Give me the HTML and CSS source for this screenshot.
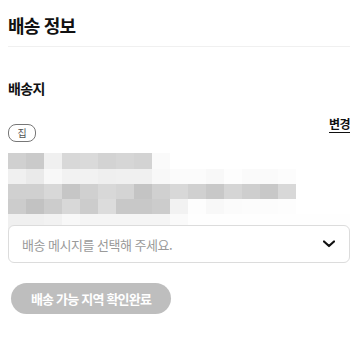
FILE: index.html
```html
<!DOCTYPE html>
<html lang="ko">
<head>
<meta charset="utf-8">
<link rel="stylesheet" href="styles.css">
</head>
<body>
<div class="page">
  <header class="head">
    <h1 class="title">배송 정보</h1>
  </header>
  <section class="ship">
    <h2 class="label">배송지</h2>
    <div class="addr-row">
      <span class="badge">집</span>
      <a class="change">변경</a>
    </div>
    <div class="blur">
      <div class="brow r1">
        <i style="background:#d0d0d0"></i><i style="background:#cacaca"></i><i style="background:#f0f0f0"></i><i style="background:#d8d8d8"></i><i style="background:#dadada"></i><i style="background:#d3d3d3"></i><i style="background:#d6d6d6"></i><i style="background:#d3d3d3"></i><i style="background:#fafafa"></i>
      </div>
      <div class="brow">
        <i style="background:#f0f0f0"></i><i style="background:#eaeaea"></i><i style="background:#f8f8f8"></i><i style="background:#f2f2f2"></i><i style="background:#f2f2f2"></i><i style="background:#efefef"></i><i style="background:#f0f0f0"></i><i style="background:#f0f0f0"></i><i style="background:#f8f8f8"></i><i style="background:#fbfbfb"></i><i style="background:#fbfbfb"></i><i style="background:#f8f8f8"></i><i style="background:#fdfdfd"></i><i style="background:#fafafa"></i><i style="background:#fafafa"></i><i style="background:#fcfcfc"></i>
      </div>
      <div class="brow">
        <i style="background:#d0d0d0"></i><i style="background:#d0d0d0"></i><i style="background:#d8d8d8"></i><i style="background:#c6c6c6"></i><i style="background:#d0d0d0"></i><i style="background:#d8d8d8"></i><i style="background:#d4d4d4"></i><i style="background:#c4c4c4"></i><i style="background:#d0d0d0"></i><i style="background:#d8d8d8"></i><i style="background:#d0d0d0"></i><i style="background:#c8c8c8"></i><i style="background:#d5d5d5"></i><i style="background:#cecece"></i><i style="background:#c8c8c8"></i><i style="background:#d8d8d8"></i>
      </div>
      <div class="brow">
        <i style="background:#cccccc"></i><i style="background:#c2c2c2"></i><i style="background:#cccccc"></i><i style="background:#d8d8d8"></i><i style="background:#cccccc"></i><i style="background:#dcdcdc"></i><i style="background:#c8c8c8"></i><i style="background:#c8c8c8"></i><i style="background:#cccccc"></i><i style="background:#f2f2f2"></i><i style="background:#fdfdfd"></i><i style="background:#f8f8f8"></i><i style="background:#fbfbfb"></i><i style="background:#fcfcfc"></i><i style="background:#fcfcfc"></i><i style="background:#fdfdfd"></i>
      </div>
      <div class="brow">
        <i style="background:#f0f0f0"></i><i style="background:#f0f0f0"></i><i style="background:#f2f2f2"></i><i style="background:#f8f8f8"></i><i style="background:#f5f5f5"></i><i style="background:#f5f5f5"></i><i style="background:#f5f5f5"></i><i style="background:#f5f5f5"></i><i style="background:#f5f5f5"></i><i style="background:#fafafa"></i><i style="background:#fefefe"></i><i style="background:#fefefe"></i><i style="background:#fefefe"></i><i style="background:#fefefe"></i><i style="background:#fefefe"></i><i style="background:#fefefe"></i><i style="background:#fefefe"></i><i style="background:#fefefe"></i><i style="background:#fefefe"></i>
      </div>
    </div>
    <div class="select">
      <span class="placeholder">배송 메시지를 선택해 주세요.</span>
      <svg class="chev" width="12" height="8" viewBox="0 0 12 8"><path d="M1 1.5 L6 6 L11 1.5" fill="none" stroke="#111" stroke-width="2.2" stroke-linecap="round" stroke-linejoin="round"/></svg>
    </div>
    <button class="confirm" type="button">배송 가능 지역 확인완료</button>
  </section>
</div>
</body>
</html>
```

FILE: styles.css
```css
* { box-sizing: border-box; }
html, body { margin: 0; padding: 0; background: #fff; }
body {
  font-family: "Noto Sans CJK KR", "Noto Sans", sans-serif;
  color: #111;
}
.page {
  width: 361px;
  padding: 0 11px 0 8px;
}
.head {
  padding: 13px 0 9px;
  border-bottom: 1px solid #f0f0f0;
}
.title {
  margin: 0;
  font-size: 18px;
  line-height: 24px;
  font-weight: 700;
  letter-spacing: -0.8px;
}
.ship {
  display: flex;
  flex-direction: column;
}
.label {
  margin: 31px 0 0;
  font-size: 14px;
  line-height: 20px;
  font-weight: 700;
  letter-spacing: -0.6px;
}
.addr-row {
  margin-top: 18px;
  display: flex;
  justify-content: space-between;
  align-items: flex-start;
}
.badge {
  margin-top: 8px;
  width: 28px;
  height: 18px;
  border: 1px solid #777;
  border-radius: 8px;
  font-size: 10px;
  line-height: 16px;
  text-align: center;
  color: #555;
}
.change {
  font-size: 12px;
  line-height: 16px;
  font-weight: 700;
  color: #111;
  letter-spacing: -0.5px;
  border-bottom: 1px solid #111;
}
.blur {
  margin-top: 11px;
  display: flex;
  flex-direction: column;
}
.brow {
  display: flex;
  height: 15px;
}
.brow.r1 { height: 16px; }
.brow i {
  display: block;
  width: 18px;
  flex: none;
}
.select {
  position: relative;
  margin-top: -4px;
  height: 38px;
  border: 1px solid #dcdcdc;
  border-radius: 6px;
  background: #fff;
  display: flex;
  align-items: center;
  justify-content: space-between;
  padding: 0 14px 0 13px;
}
.placeholder {
  font-size: 13px;
  color: #9a9a9a;
  letter-spacing: -0.5px;
}
.chev { display: block; }
.confirm {
  margin: 20px 0 0 3px;
  align-self: flex-start;
  width: 160px;
  height: 31px;
  border: 0;
  border-radius: 16px;
  background: #bebebe;
  color: #fff;
  font-family: inherit;
  font-size: 13px;
  font-weight: 700;
  letter-spacing: -0.8px;
  padding: 0;
}
```
